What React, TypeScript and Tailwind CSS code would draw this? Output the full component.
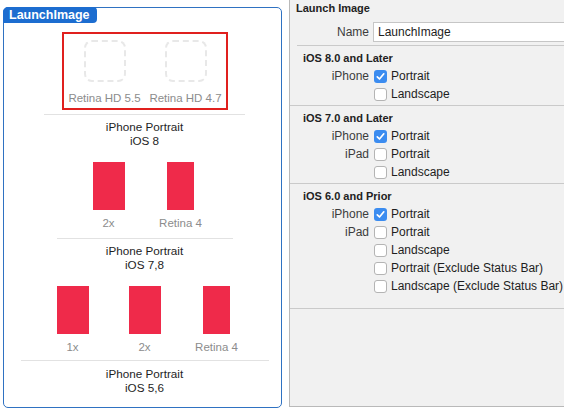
const RED = "bg-[#ef2a4a]"

function Tile({ w, label }: { w: number; label: string }) {
  return (
    <div className="flex w-[72px] flex-col items-center">
      <div className={`h-[48px] ${RED}`} style={{ width: w }} />
      <div className="mt-[6px] h-[14px] whitespace-nowrap text-[11.5px] leading-[14px] text-[#8c8c8c]">{label}</div>
    </div>
  )
}

function Caption({ os }: { os: string }) {
  return (
    <div className="flex flex-col items-center text-[11.7px] leading-[14px] text-[#1e1e1e]">
      <div>iPhone Portrait</div>
      <div>{os}</div>
    </div>
  )
}

function Checkbox({ checked }: { checked?: boolean }) {
  if (checked) {
    return (
      <div className="flex h-[13px] w-[13px] items-center justify-center rounded-[3px] bg-[#3b8cf0]">
        <svg width="11" height="11" viewBox="0 0 11 11">
          <path d="M2.3 5.8 L4.5 8 L8.8 2.8" fill="none" stroke="white" strokeWidth="1.7" strokeLinecap="round" strokeLinejoin="round" />
        </svg>
      </div>
    )
  }
  return <div className="h-[13px] w-[13px] rounded-[3px] border border-[#b4b4b4] bg-white" />
}

function Row({ label, checked, text }: { label?: string; checked?: boolean; text: string }) {
  return (
    <div className="flex h-[18px] items-center">
      <span className="w-[79px] text-right text-[#3c3c3c]">{label}</span>
      <div className="ml-[5px]"><Checkbox checked={checked} /></div>
      <span className="ml-[4px] whitespace-nowrap text-[#1e1e1e]">{text}</span>
    </div>
  )
}

function Header({ children }: { children: string }) {
  return <div className="mt-[5px] pl-[13px] text-[11px] font-bold leading-[14px] text-[#222]">{children}</div>
}

export default function App() {
  return (
    <div className="flex h-[411px] w-[564px] overflow-hidden bg-white font-['Liberation_Sans',Arial,sans-serif]">
      {/* left: image set */}
      <div className="w-[289px] shrink-0">
        <div className="relative ml-[3px] mt-[7px] h-[401px] w-[279px] rounded-[5px] border border-[#2f72c2]">
          <div className="absolute -left-px -top-px h-4 w-[94px] rounded-tl-[5px] rounded-tr-[4px] rounded-br-[4px] bg-[#1c6dd0] pl-[6px] text-[12.5px] font-bold leading-4 text-white">
            LaunchImage
          </div>
          <div className="flex flex-col items-center pl-[4px]">
            <div className="ml-px mt-[24px] flex h-[78px] w-[166px] justify-center border-2 border-[#e0201e] pt-[6px]">
              {["Retina HD 5.5", "Retina HD 4.7"].map((l) => (
                <div key={l} className="flex w-[84px] flex-col items-center">
                  <div className="h-[42px] w-[42px] rounded-[8px] border-2 border-dashed border-[#e8e8e8]" />
                  <div className="mt-[9px] whitespace-nowrap text-[11.5px] leading-[14px] text-[#8c8c8c]">{l}</div>
                </div>
              ))}
            </div>
            <div className="mt-[4px] h-px w-[201px] bg-[#e2e2e2]" />
            <div className="mt-[5px]"><Caption os="iOS 8" /></div>
            <div className="mt-[14px] flex">
              <Tile w={32} label="2x" />
              <Tile w={27} label="Retina 4" />
            </div>
            <div className="mt-[8px] h-px w-[176px] bg-[#e2e2e2]" />
            <div className="mt-[5px]"><Caption os="iOS 7,8" /></div>
            <div className="mt-[14px] flex">
              <Tile w={32} label="1x" />
              <Tile w={32} label="2x" />
              <Tile w={27} label="Retina 4" />
            </div>
            <div className="mt-[6px] h-px w-[248px] bg-[#e2e2e2]" />
            <div className="mt-[6px]"><Caption os="iOS 5,6" /></div>
          </div>
        </div>
      </div>

      {/* right: attributes inspector */}
      <div className="flex h-[407px] w-[275px] shrink-0 flex-col border-b border-l border-[#b9b9b9] bg-[#f1f1f1] text-[12px] leading-[14px]">
        <div className="pl-[6px] pt-px text-[11px] font-bold text-[#222]">Launch Image</div>
        <div className="mt-[7px] flex h-5 items-center">
          <span className="w-[79px] text-right text-[#3c3c3c]">Name</span>
          <div className="ml-[4px] flex h-5 flex-1 items-center border border-r-0 border-[#c6c6c6] bg-white pl-[4px] text-[#1e1e1e]">
            LaunchImage
          </div>
        </div>
        <div className="ml-[7px] mt-[3px] h-px bg-[#cacaca]" />

        <Header>iOS 8.0 and Later</Header>
        <div className="mt-[2px]">
          <Row label="iPhone" checked text="Portrait" />
          <Row text="Landscape" />
        </div>
        <div className="mt-[2px] h-px bg-[#cacaca]" />

        <Header>iOS 7.0 and Later</Header>
        <div className="mt-[2px]">
          <Row label="iPhone" checked text="Portrait" />
          <Row label="iPad" text="Portrait" />
          <Row text="Landscape" />
        </div>
        <div className="mt-[2px] h-px bg-[#cacaca]" />

        <Header>iOS 6.0 and Prior</Header>
        <div className="mt-[2px]">
          <Row label="iPhone" checked text="Portrait" />
          <Row label="iPad" text="Portrait" />
          <Row text="Landscape" />
          <Row text="Portrait (Exclude Status Bar)" />
          <Row text="Landscape (Exclude Status Bar)" />
        </div>
        <div className="mt-[13px] h-px bg-[#cacaca]" />
      </div>
    </div>
  )
}
